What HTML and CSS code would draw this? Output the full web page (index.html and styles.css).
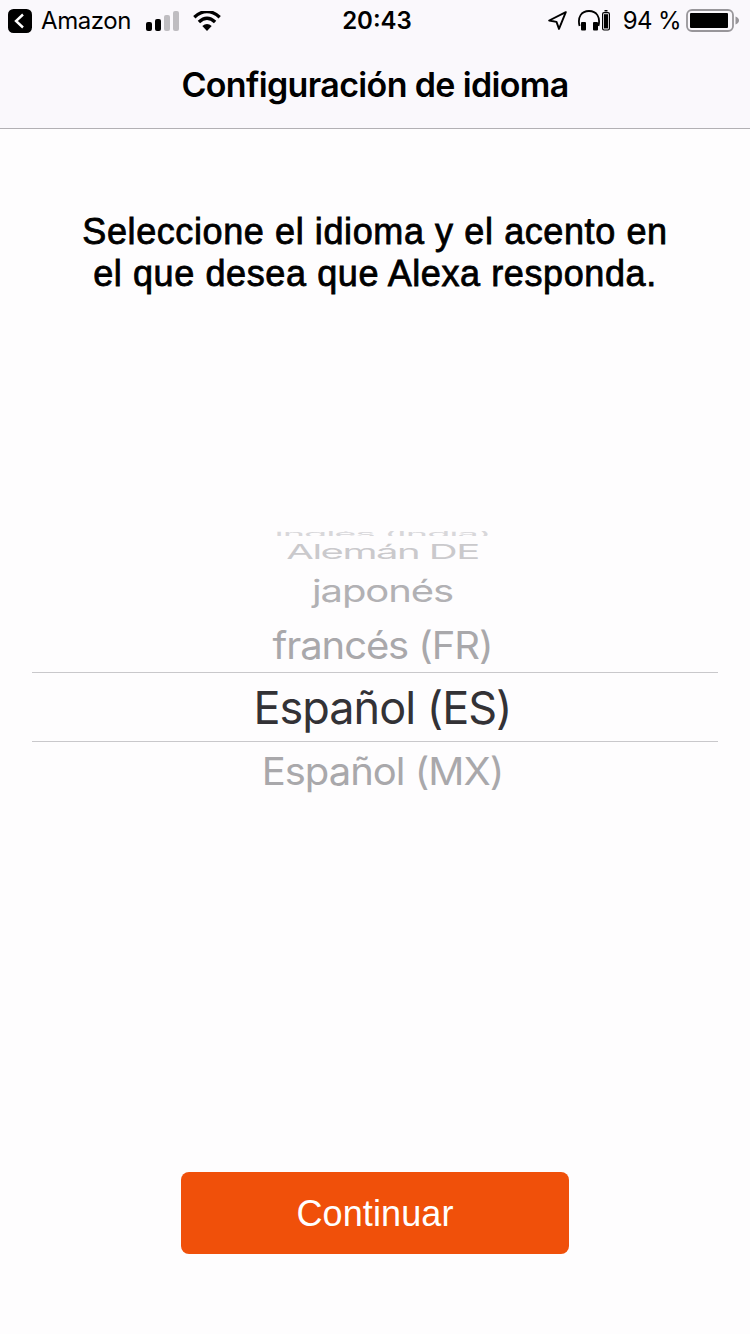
FILE: index.html
```html
<!DOCTYPE html>
<html lang="es">
<head>
	<meta charset="UTF-8">
	<title>Configuración de idioma</title>
	<link rel="stylesheet" href="styles.css">
</head>
<body>
	<header class="header">
		<div class="status">
			<div class="status-left">
				<svg class="back" width="24" height="24" viewBox="0 0 24 24">
					<rect width="24" height="24" rx="5.5"/>
					<path d="M15 5.500L8 12l7 6.500" fill="none" stroke="#fff" stroke-width="2.400"/>
				</svg>
				<span class="app">Amazon</span>
				<svg class="signal" width="34" height="20" viewBox="0 0 34 20">
					<rect x="0" y="11" width="6" height="9" rx="2"/>
					<rect x="9" y="8" width="6" height="12" rx="2"/>
					<rect x="18" y="4" width="6" height="16" rx="2" fill="#bfbdc1"/>
					<rect x="27" y="0" width="6" height="20" rx="2" fill="#bfbdc1"/>
				</svg>
				<svg class="wifi" width="28" height="20" viewBox="0 0 28 20">
					<path d="M1.300 6.200Q14-5 26.700 6.200M5.900 11Q14 3.500 22.100 11" fill="none" stroke="#000" stroke-width="3.400"/>
					<path d="M9.300 15.100Q14 10.800 18.700 15.100L14 20z"/>
				</svg>
			</div>
			<span class="time">20:43</span>
			<div class="status-right">
				<svg class="location" width="19" height="19" viewBox="0 0 19 19">
					<path d="M17.800 1.200L1.200 9.500l7.300 1.400 2.500 7z" fill="none" stroke="#000" stroke-width="1.900" stroke-linejoin="round"/>
				</svg>
				<svg class="headphones" width="33" height="21" viewBox="0 0 33 21">
					<path d="M1.600 16C-.8 7 3.500 1 11 1s11.800 6 9.400 15" fill="none" stroke="#000" stroke-width="1.800"/>
					<rect x="3" y="12" width="5" height="8.500" rx="1"/>
					<rect x="15" y="12" width="5" height="8.500" rx="1"/>
					<rect x="24.600" y="2.600" width="6.800" height="17.400" rx="1.400" fill="none" stroke="#000" stroke-width="1.200"/>
					<rect x="26" y="4.200" width="4" height="14.200"/>
					<rect x="26.500" y="0" width="3" height="1.500"/>
				</svg>
				<span class="percent">94 %</span>
				<svg class="battery" width="53" height="23" viewBox="0 0 53 23">
					<rect x="1" y="1" width="46" height="21" rx="5" fill="none" stroke="#98969a" stroke-width="1.800"/>
					<rect x="4" y="4" width="38" height="15" rx="1"/>
					<path d="M49.500 7.500q3.500 1.500 3.500 4t-3.500 4z" fill="#98969a"/>
				</svg>
			</div>
		</div>
		<h1 class="title"><span>Configuración de idioma</span></h1>
	</header>
	<main class="main">
		<p class="intro">Seleccione el idioma y el acento en<br>el que desea que Alexa responda.</p>
		<ul class="picker">
			<li class="far3"><span>inglés (India)</span></li>
			<li class="far2"><span>Alemán DE</span></li>
			<li class="far1"><span>japonés</span></li>
			<li class="near"><span>francés (FR)</span></li>
			<li class="selected"><span>Español (ES)</span></li>
			<li class="after"><span>Español (MX)</span></li>
		</ul>
		<button class="continue" type="button">Continuar</button>
	</main>
</body>
</html>
```
FILE: styles.css
```css
*{
	box-sizing:border-box;
	margin:0;
	padding:0;
}
body{
	display:flex;
	flex-direction:column;
	height:1334px;
	background:#fefdfe;
	color:#000;
	font-family:Inter, "Liberation Sans", sans-serif;
	overflow:hidden;
}
svg{
	display:block;
	flex:none;
}
span{
	white-space:nowrap;
}
.header{
	height:129px;
	background:#faf8fc;
	border-bottom:1px solid #b2b0b4;
}
.status{
	display:grid;
	grid-template-columns:1fr auto 1fr;
	align-items:center;
	height:41px;
	padding:0 11px 0 8px;
	font-size:24px;
}
.status-left, .status-right{
	display:flex;
	align-items:center;
}
.status-right{
	justify-content:flex-end;
}
.app{
	margin-left:9px;
	letter-spacing:-0.4px;
}
.signal{
	margin-left:15px;
}
.wifi{
	margin-left:13px;
}
.time{
	padding-left:7px;
	font-weight:600;
}
.headphones{
	margin-left:11px;
}
.percent{
	margin-left:12px;
	letter-spacing:-0.6px;
}
.battery{
	margin-left:5px;
}
.title{
	display:flex;
	justify-content:center;
	height:87px;
	line-height:87px;
	font-size:34px;
	font-weight:600;
	letter-spacing:-0.65px;
}
.main{
	flex:1;
	display:flex;
	flex-direction:column;
	align-items:center;
}
.intro{
	margin-top:82px;
	font-family:"Liberation Sans", sans-serif;
	font-size:36px;
	line-height:42px;
	letter-spacing:0.6px;
	text-align:center;
	-webkit-text-stroke:0.8px #000;
}
/* rueda del selector: cada fila se aplana al alejarse del centro */
.picker{
	display:flex;
	flex-direction:column;
	width:686px;
	margin-top:236px;
	padding-left:15px;
	list-style:none;
	color:#a9a8ab;
}
.picker li{
	display:flex;
	align-items:center;
	justify-content:center;
	font-size:40px;
	letter-spacing:-1.1px;
}
.picker .far3{
	height:5px;
	overflow:hidden;
	color:#d8d7da;
	font-size:38px;
}
.far3 span{
	transform:scaleY(0.24);
}
.picker .far2{
	height:31px;
	color:#cac9cc;
	letter-spacing:-1.500px;
}
.far2 span{
	transform:scaleY(0.5);
}
.picker .far1{
	height:46px;
	color:#b2b1b4;
}
.far1 span{
	transform:scaleY(0.76);
}
.picker .near{
	height:59px;
	padding-top:5px;
}
.near span{
	transform:scaleY(0.95);
}
.picker .selected{
	height:70px;
	margin-left:-15px;
	padding-left:15px;
	border-top:1px solid #c9c8cb;
	border-bottom:1px solid #c9c8cb;
	color:#333236;
	font-size:45px;
	letter-spacing:-1px;
}
.picker .after{
	height:58px;
	letter-spacing:-1px;
}
.after span{
	transform:scaleY(0.95);
}
.continue{
	width:388px;
	height:82px;
	margin-top:auto;
	margin-bottom:80px;
	padding-top:2px;
	border:none;
	border-radius:8px;
	background:#f0500a;
	color:#fff;
	font-family:"Liberation Sans", sans-serif;
	font-size:36px;
	letter-spacing:0.1px;
}
```
